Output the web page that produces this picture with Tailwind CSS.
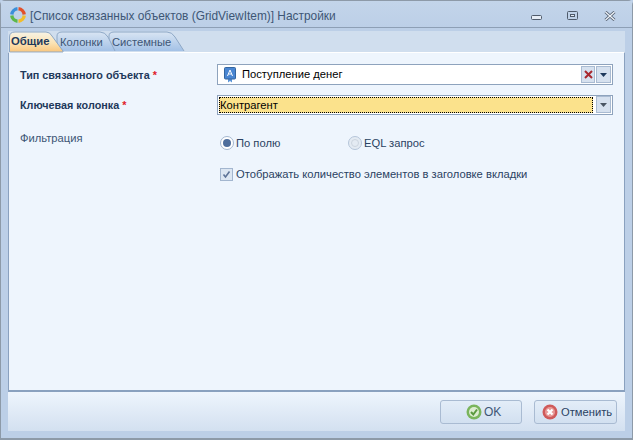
<!DOCTYPE html>
<html lang="ru">
<head>
  <meta charset="UTF-8">
  <title>Настройки</title>
  <script src="https://cdn.jsdelivr.net/npm/@tailwindcss/browser@4"></script>
</head>
<body class="w-[633px] h-[440px] overflow-hidden bg-[#bccfe7] font-['Liberation_Sans',sans-serif] text-[11.2px] text-[#2a4262]">
<div class="w-[633px] h-[440px] flex flex-col border border-[#8d9aa8] rounded-t-[5px] border-b-2 bg-[#bccfe7]">
  <!-- Title bar -->
  <header class="h-[27px] flex items-center pt-[5px] pl-[8px] bg-gradient-to-b from-[#c3d5ea] to-[#bccfe7] border-b border-[#8d9fb5] shrink-0">
    <svg width="18" height="18" viewBox="0 0 18 18" fill="none" class="mr-[3px] -mt-[3px]">
      <path d="M9.5 2.8A6.2 6.2 0 0 1 15.2 8.5" stroke="#e2502a" stroke-width="3.4"/>
      <path d="M15.2 9.5A6.2 6.2 0 0 1 9.5 15.2" stroke="#f2bd2c" stroke-width="3.4"/>
      <path d="M8.5 15.2A6.2 6.2 0 0 1 2.8 9.5" stroke="#5cb84a" stroke-width="3.4"/>
      <path d="M2.8 8.5A6.2 6.2 0 0 1 8.5 2.8" stroke="#3b8fd8" stroke-width="3.4"/>
    </svg>
    <span class="text-[11.9px] text-[#3d5675]">[Список связанных объектов (GridViewItem)] Настройки</span>
    <div class="ml-auto flex items-center -mt-[1px]">
      <svg width="12" height="6" viewBox="0 0 12 6" class="mr-[24px] mt-[3px]"><rect x="0.5" y="0.5" width="10" height="4" rx="1" fill="#e6edf6" stroke="#4f5b6b"/></svg>
      <svg width="12" height="10" viewBox="0 0 12 10" class="mr-[25px]"><rect x="0.5" y="0.5" width="10" height="8" rx="1" fill="none" stroke="#4f5b6b"/><rect x="3.5" y="3.5" width="4" height="2" fill="#e6edf6" stroke="#4f5b6b"/></svg>
      <svg width="12" height="10" viewBox="0 0 12 10" class="mr-[16px]"><path d="M1.5 1L10.5 9M10.5 1L1.5 9" stroke="#4f5b6b" stroke-width="3"/><path d="M1.5 1L10.5 9M10.5 1L1.5 9" stroke="#eef3f9" stroke-width="1.4"/></svg>
    </div>
  </header>

  <div class="flex-1 px-[7px] flex flex-col pt-[3px] min-h-0">
    <div class="flex-1 flex flex-col bg-[#d0deee] min-h-0">
      <!-- Tabs -->
      <nav class="h-[21px] flex shrink-0 pl-[1px]">
        <div class="relative w-[47px] h-[21px] z-20">
          <svg class="absolute inset-0" width="56" height="22" viewBox="0 0 56 22">
            <defs><linearGradient id="tabOn" x1="0" y1="0" x2="0" y2="1"><stop offset="0" stop-color="#f7f3e6"/><stop offset="0.55" stop-color="#fbe3b4"/><stop offset="1" stop-color="#f9c67d"/></linearGradient></defs>
            <path d="M0.5 21V6Q0.5 1 6 1H37Q41 1 43 5L54 20V21Z" fill="url(#tabOn)" stroke="#8ea8c6"/>
          </svg>
          <span class="absolute left-[2px] top-[2px] font-bold text-[11.3px] text-[#1e395b]">Общие</span>
        </div>
        <div class="relative w-[52px] h-[21px] z-10">
          <svg class="absolute inset-0" width="62" height="22" viewBox="0 0 62 22">
            <defs><linearGradient id="tabOff" x1="0" y1="0" x2="0" y2="1"><stop offset="0" stop-color="#d9e5f3"/><stop offset="1" stop-color="#a3c1e6"/></linearGradient></defs>
            <path d="M1 20V5Q1 1 6 1H44Q49 1 52 6L59 20" fill="url(#tabOff)" stroke="#8ea8c6"/>
          </svg>
          <span class="absolute left-[4px] top-[3px] z-30 text-[#3d5675]">Колонки</span>
        </div>
        <div class="relative w-[75px] h-[21px]">
          <svg class="absolute inset-0" width="78" height="22" viewBox="0 0 78 22">
            <path d="M1 20V5Q1 1 6 1H59Q64 1 67 6L76 20" fill="url(#tabOff)" stroke="#8ea8c6"/>
          </svg>
          <span class="absolute left-[4px] top-[3px] text-[#3d5675]">Системные</span>
        </div>
      </nav>

      <!-- Content -->
      <main class="flex-1 min-h-0 bg-[#eef5fd] border-t border-white border-b-2 border-b-[#8aa1bf] border-x border-x-[#8aa1bf] pt-[10px]">
        <section class="flex items-center h-[23px] pl-[11px]">
          <label class="w-[197px] pt-[1px] font-bold text-[10.8px] text-[#1e395b]">Тип связанного объекта <span class="text-[#e0202a]">*</span></label>
          <div class="w-[396px] h-[21px] bg-white border border-[#8ea3bd] flex items-center pl-[6px] pr-[1px]">
            <svg width="12" height="16" viewBox="0 0 12 16" class="mr-[6px] shrink-0">
              <path d="M4 11V15.5L6 14L8 15.5V11Z" fill="#5b95d8"/>
              <rect x="0.5" y="0.5" width="11" height="11.5" rx="1" fill="#4a86d2" stroke="#34659f"/>
              <path d="M3.5 9L6 3L8.5 9M4.5 7H7.5" fill="none" stroke="#fff"/>
            </svg>
            <span class="text-black">Поступление денег</span>
            <button class="ml-auto w-[14px] h-[17px] bg-[#d6e1ef] border border-[#a9bbd2] flex items-center justify-center">
              <svg width="9" height="9" viewBox="0 0 9 9"><path d="M1 1L8 8M8 1L1 8" stroke="#a8282f" stroke-width="2"/></svg>
            </button>
            <button class="ml-[1px] w-[15px] h-[17px] bg-[#d6e1ef] border border-[#a9bbd2] flex items-center justify-center">
              <svg width="7" height="4" viewBox="0 0 7 4"><path d="M0 0H7L3.5 4Z" fill="#1e395b"/></svg>
            </button>
          </div>
        </section>
        <section class="flex items-center h-[21px] mt-[8px] pl-[11px]">
          <label class="w-[197px] pt-[1px] font-bold text-[10.8px] text-[#1e395b]">Ключевая колонка <span class="text-[#e0202a]">*</span></label>
          <div class="w-[396px] h-[20px] bg-white border border-[#8ea3bd] flex items-center pr-[1px]">
            <div class="flex-1 h-[16px] ml-[1px] mr-[3px] border border-dotted border-black bg-[#fbe28c] leading-[14px] text-black">Контрагент</div>
            <button class="w-[15px] h-[17px] bg-[#d6e1ef] border border-[#a9bbd2] flex items-center justify-center">
              <svg width="7" height="4" viewBox="0 0 7 4"><path d="M0 0H7L3.5 4Z" fill="#4a5563"/></svg>
            </button>
          </div>
        </section>
        <section class="flex mt-[16px] pl-[11px]">
          <label class="w-[200px] text-[#3d5675] -mt-[1px]">Фильтрация</label>
          <div class="flex flex-col pt-[3px]">
            <div class="flex h-[18px] items-center">
              <span class="w-[128px] flex items-center gap-[2px]">
                <span class="w-[14px] h-[14px] rounded-full border border-[#a3b6cf] bg-white flex items-center justify-center"><span class="w-[8px] h-[8px] rounded-full bg-[#4d6d9c]"></span></span>
                По полю
              </span>
              <span class="flex items-center gap-[2px]">
                <span class="w-[14px] h-[14px] rounded-full border border-[#b5c5d9] bg-[#e4ebf3] flex items-center justify-center"><span class="w-[8px] h-[8px] rounded-full border border-[#ccd5df]"></span></span>
                EQL запрос
              </span>
            </div>
            <div class="flex items-center gap-[3px] mt-[15px] h-[14px]">
              <span class="w-[13px] h-[13px] border border-[#a3b6cf] bg-[#dce6f2] flex items-center justify-center">
                <svg width="9" height="9" viewBox="0 0 9 9"><path d="M1.5 4.5L3.5 7L7.5 1.5" fill="none" stroke="#5d7397" stroke-width="1.6"/></svg>
              </span>
              <span>Отображать количество элементов в заголовке вкладки</span>
            </div>
          </div>
        </section>
      </main>

      <!-- Footer -->
      <footer class="h-[39px] shrink-0 bg-gradient-to-b from-[#eef5fd] to-[#d3e0f0] flex items-start justify-end gap-[12px] pt-[8px] pr-[8px]">
        <button class="w-[82px] h-[24px] rounded-[3px] border border-[#a9bbd2] bg-gradient-to-b from-[#e3edf8] to-[#d2e0f0] flex items-center pl-[25px] gap-[2px] text-[12px] text-[#3d5675]">
          <svg width="16" height="16" viewBox="0 0 16 16"><circle cx="8" cy="8" r="7.5" fill="#7ab55c"/><circle cx="8" cy="8" r="5" fill="#dcecd0"/><path d="M5 8L7.3 10.5L11 5.5" fill="none" stroke="#5a9a3e" stroke-width="2"/></svg>
          OK
        </button>
        <button class="w-[83px] h-[24px] rounded-[3px] border border-[#a9bbd2] bg-gradient-to-b from-[#e3edf8] to-[#d2e0f0] flex items-center pl-[7px] gap-[3px] text-[11.2px] text-[#2a4262]">
          <svg width="16" height="16" viewBox="0 0 16 16"><circle cx="8" cy="8" r="7.5" fill="#cf5a5a"/><circle cx="8" cy="8" r="5" fill="#e89a98"/><path d="M5.5 5.5L10.5 10.5M10.5 5.5L5.5 10.5" stroke="#fff" stroke-width="2.2"/></svg>
          Отменить
        </button>
      </footer>
      <div class="h-[7px] shrink-0 bg-[#bccfe7] -mx-[7px]"></div>
    </div>
  </div>
</div>
</body>
</html>
